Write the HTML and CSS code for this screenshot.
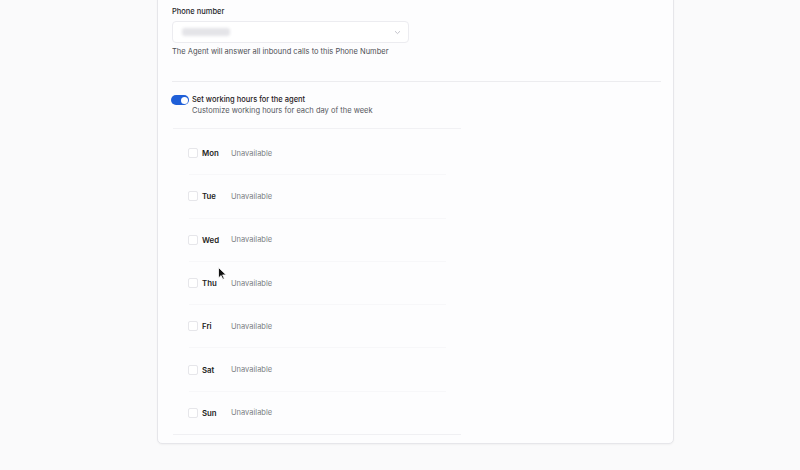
FILE: index.html
```html
<!DOCTYPE html>
<html lang="en">
<head>
  <meta charset="UTF-8">
  <meta name="viewport" content="width=device-width, initial-scale=1.0">
  <title>Agent settings</title>
  <link rel="stylesheet" href="styles.css">
</head>
<body>
  <div class="card">
    <div class="field">
      <label class="field-label">Phone number</label>
      <div class="select">
        <span class="select-value"></span>
        <svg class="chevron" width="7" height="5" viewBox="0 0 7 5"><path d="M1 1.2l2.5 2.4L6 1.2" fill="none" stroke="#c4c4cc" stroke-width="1"/></svg>
      </div>
      <p class="field-help">The Agent will answer all inbound calls to this Phone Number</p>
    </div>

    <hr class="divider">

    <div class="hours-toggle">
      <span class="switch"><span class="knob"></span></span>
      <div>
        <div class="toggle-title">Set working hours for the agent</div>
        <div class="toggle-sub">Customize working hours for each day of the week</div>
      </div>
    </div>

    <div class="days">
      <div class="day-row"><span class="check"></span><span class="day">Mon</span><span class="status">Unavailable</span></div>
      <div class="day-row"><span class="check"></span><span class="day">Tue</span><span class="status">Unavailable</span></div>
      <div class="day-row"><span class="check"></span><span class="day">Wed</span><span class="status">Unavailable</span></div>
      <div class="day-row"><span class="check"></span><span class="day">Thu</span><span class="status">Unavailable</span></div>
      <div class="day-row"><span class="check"></span><span class="day">Fri</span><span class="status">Unavailable</span></div>
      <div class="day-row"><span class="check"></span><span class="day">Sat</span><span class="status">Unavailable</span></div>
      <div class="day-row"><span class="check"></span><span class="day">Sun</span><span class="status">Unavailable</span></div>
    </div>
  </div>

  <svg class="cursor" width="9" height="13" viewBox="0 0 9 13"><path d="M0.5 0.5v10.5l2.6-2.5 1.7 3.8 1.5-0.7-1.7-3.7h3.6z" fill="#111" stroke="#fff" stroke-width="0.8"/></svg>
</body>
</html>
```

FILE: styles.css
```css
body {
  margin: 0;
  background: #fafafb;
  font-family: Inter, "Noto Sans", sans-serif;
  color: #1f2023;
  height: 470px;
  overflow: hidden;
  position: relative;
}

.card {
  width: 489px;
  margin: -20px 0 0 157px;
  padding: 26px 12px 8px 14px;
  background: #fdfdfe;
  border: 1px solid #e6e6ea;
  border-radius: 5px;
  box-shadow: 0 1px 2px rgba(0, 0, 0, 0.04);
}

.field-label {
  display: block;
  font-size: 7.5px;
  font-weight: 500;
  line-height: 10px;
  color: #26272b;
}

.select {
  width: 219px;
  height: 20px;
  margin-top: 4px;
  border: 1px solid #ececf0;
  border-radius: 4px;
  background: #fff;
  display: flex;
  align-items: center;
  justify-content: space-between;
  padding: 0 7px 0 9px;
  box-sizing: content-box;
}

.select-value {
  width: 48px;
  height: 8px;
  background: #e4e4e8;
  border-radius: 3px;
  filter: blur(1.5px);
}

.field-help {
  margin: 4px 0 0;
  font-size: 7.5px;
  line-height: 10px;
  color: #4d4f55;
}

.divider {
  border: 0;
  border-top: 1px solid #ececef;
  margin: 24px 0 0;
}

.hours-toggle {
  display: flex;
  align-items: flex-start;
  gap: 3px;
  margin: 13px 0 0 -1px;
}

.switch {
  width: 18px;
  height: 10px;
  border-radius: 5px;
  background: #1f5fd8;
  position: relative;
  flex-shrink: 0;
}

.knob {
  position: absolute;
  right: 1.5px;
  top: 1.5px;
  width: 7px;
  height: 7px;
  border-radius: 50%;
  background: #fff;
}

.toggle-title {
  font-size: 7.5px;
  font-weight: 500;
  line-height: 10px;
  color: #1f2023;
}

.toggle-sub {
  font-size: 7.5px;
  line-height: 11px;
  color: #55575d;
}

.days {
  width: 288px;
  margin: 12px 0 0 1px;
  padding-top: 3px;
  border-top: 1px solid #f1f1f4;
  border-bottom: 1px solid #f0f0f3;
}

.day-row {
  display: flex;
  align-items: center;
  height: 42.3px;
  margin: 0 15px 0 16px;
  border-bottom: 1px solid #f7f7f9;
}

.day-row:last-child {
  border-bottom: 0;
}

.check {
  width: 8px;
  height: 8px;
  border: 1px solid #e6e6ea;
  border-radius: 2px;
  background: #fff;
  margin-right: 4px;
  margin-left: -1px;
}

.day {
  width: 29px;
  font-size: 7.8px;
  font-weight: 600;
  color: #1d1e22;
}

.status {
  font-size: 7.5px;
  color: #7b7d83;
}

.cursor {
  position: absolute;
  left: 218px;
  top: 267px;
}
```
